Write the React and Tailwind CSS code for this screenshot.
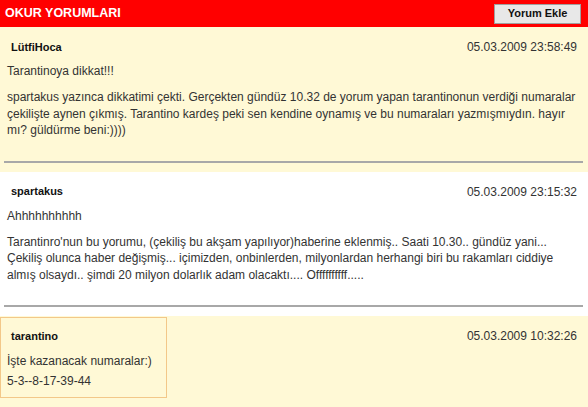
const comments = [
  {
    name: 'LütfiHoca',
    date: '05.03.2009 23:58:49',
    title: 'Tarantinoya dikkat!!!',
    body: 'spartakus yazınca dikkatimi çekti. Gerçekten gündüz 10.32 de yorum yapan tarantinonun verdiği numaralar çekilişte aynen çıkmış. Tarantino kardeş peki sen kendine oynamış ve bu numaraları yazmışmıydın. hayır mı? güldürme beni:))))',
    bg: 'bg-[#fff9d6]',
  },
  {
    name: 'spartakus',
    date: '05.03.2009 23:15:32',
    title: 'Ahhhhhhhhhh',
    body: "Tarantinro'nun bu yorumu, (çekiliş bu akşam yapılıyor)haberine eklenmiş.. Saati 10.30.. gündüz yani... Çekiliş olunca haber değişmiş... içimizden, onbinlerden, milyonlardan herhangi biri bu rakamları ciddiye almış olsaydı.. şimdi 20 milyon dolarlık adam olacaktı.... Offffffffff.....",
    bg: 'bg-white',
  },
];

function Comment({ c }) {
  return (
    <div className={`${c.bg} pt-[12px] pb-[9px]`}>
      <div className="flex items-center justify-between h-[16px] pl-[11px] pr-[11px]">
        <span className="text-[11px] font-bold text-[#111]">{c.name}</span>
        <span className="text-[12px] text-[#333]">{c.date}</span>
      </div>
      <p className="mt-[8px] pl-[7px] text-[12px] leading-[16.5px] text-[#333]">{c.title}</p>
      <p className="mt-[9.5px] pl-[7px] pr-[12px] text-[12px] leading-[16.5px] text-[#333]">{c.body}</p>
      <div className="mt-[22px] ml-[4px] mr-[5px] h-[2px] bg-[#a8a8a8]" />
    </div>
  );
}

export default function App() {
  return (
    <div
      className="w-[588px] h-[407px] overflow-hidden bg-white"
      style={{ fontFamily: '"Liberation Sans", Arial, sans-serif' }}
    >
      <div className="h-[27px] bg-[#ff0000] flex items-center justify-between pl-[5px] pr-[7px]">
        <span className="text-[12.5px] font-bold text-white">OKUR YORUMLARI</span>
        <button className="h-[20px] w-[87px] border border-[#a0a0a0] bg-[#e8e8e8] text-[11px] font-bold text-[#111]">
          Yorum Ekle
        </button>
      </div>

      {comments.map((c) => (
        <Comment key={c.name} c={c} />
      ))}

      <div className="bg-[#fff9d6] flex items-start justify-between pt-[1px] pb-[10px] pr-[11px]">
        <div className="w-[167px] h-[81px] border border-[#f3c889] pt-[10px]">
          <div className="h-[16px] flex items-center pl-[10px] text-[11px] font-bold text-[#111]">tarantino</div>
          <p className="mt-[9px] pl-[6px] text-[12px] leading-[16.5px] text-[#333]">İşte kazanacak numaralar:)</p>
          <p className="mt-[3.5px] pl-[6px] text-[12px] leading-[16.5px] text-[#333]">5-3--8-17-39-44</p>
        </div>
        <span className="mt-[11px] h-[16px] flex items-center text-[12px] text-[#333]">05.03.2009 10:32:26</span>
      </div>
    </div>
  );
}
